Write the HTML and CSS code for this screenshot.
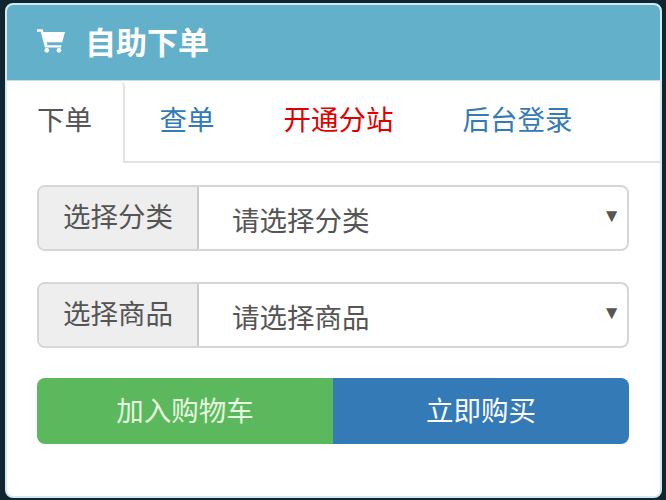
FILE: index.html
```html
<!DOCTYPE html>
<html lang="zh-CN">
  <head>
    <meta charset="UTF-8" />
    <title>自助下单</title>
    <link rel="stylesheet" href="styles.css">
  </head>
  <body>
    <div class="panel">
      <div class="panel-heading">
        <svg class="cart" viewBox="0 0 30 26">
          <path d="M0 1h6l1 3h23l-3 11H10.500l.5 3h15v2.500H8.500L4 3.500H0z" fill="#fff" />
          <circle cx="10.500" cy="23.500" r="2.500" fill="#fff" />
          <circle cx="23.500" cy="23.500" r="2.500" fill="#fff" />
        </svg>
        <h3>自助下单</h3>
      </div>
      <ul class="tabs">
        <li class="tab active">下单</li>
        <li class="tab">查单</li>
        <li class="tab red">开通分站</li>
        <li class="tab">后台登录</li>
      </ul>
      <div class="panel-body">
        <div class="input-group">
          <span class="addon">选择分类</span>
          <div class="select">请选择分类<span class="arrow">▼</span></div>
        </div>
        <div class="input-group">
          <span class="addon">选择商品</span>
          <div class="select">请选择商品<span class="arrow">▼</span></div>
        </div>
        <div class="btn-group">
          <div class="btn green">加入购物车</div>
          <div class="btn blue">立即购买</div>
        </div>
      </div>
    </div>
  </body>
</html>
```

FILE: styles.css
```css
html,
body {
  height: 100%;
}
body {
  margin: 0;
  padding: 3px 4px 2px 5px;
  box-sizing: border-box;
  background-color: #0f2630;
  font-family: "Liberation Sans", "Noto Sans CJK SC", sans-serif;
  overflow: hidden;
}
.panel {
  height: 100%;
  background-color: #fff;
  border: 2px solid #d3e9f1;
  border-radius: 8px;
  box-sizing: border-box;
  overflow: hidden;
}
.panel-heading {
  height: 76px;
  display: flex;
  align-items: center;
  padding: 0 0 5px 30px;
  box-sizing: border-box;
  background-color: #63b0cb;
  border-bottom: 1px solid #c5dfe8;
}
.cart {
  width: 28px;
  height: 25px;
}
h3 {
  margin: 0 0 0 20px;
  font-size: 31px;
  font-weight: 700;
  color: #fff;
}
.tabs {
  display: flex;
  height: 82px;
  margin: 0;
  padding: 0;
  list-style: none;
  border-bottom: 2px solid #e2e2e2;
  box-sizing: border-box;
}
.tab {
  padding: 0 34.500px;
  font-size: 27.500px;
  line-height: 79px;
  color: #337ab7;
}
.active {
  height: 82px;
  padding: 0 31px 0 30px;
  color: #555;
  background-color: #fff;
  border-right: 2px solid #e2e2e2;
  border-radius: 0 6px 0 0;
}
.red {
  color: #e00000;
}
.panel-body {
  padding: 22px 31px 0 30px;
}
.input-group {
  display: flex;
  height: 66px;
  margin-bottom: 31px;
  border: 2px solid #d6d6d6;
  border-radius: 8px;
  box-sizing: border-box;
  overflow: hidden;
}
.addon {
  width: 160px;
  padding-bottom: 6px;
  box-sizing: border-box;
  display: flex;
  align-items: center;
  justify-content: center;
  font-size: 27.500px;
  color: #555;
  background-color: #eee;
  border-right: 2px solid #ccc;
}
.select {
  flex: 1;
  display: flex;
  align-items: center;
  justify-content: space-between;
  padding: 1px 6px 0 33px;
  font-size: 27.500px;
  color: #555;
}
.arrow {
  font-size: 19px;
  padding-bottom: 6px;
}
.btn-group {
  display: flex;
  height: 66px;
  margin-top: -1px;
  border-radius: 8px;
  overflow: hidden;
}
.btn {
  flex: 1;
  display: flex;
  align-items: center;
  justify-content: center;
  padding-bottom: 4px;
  font-size: 27.500px;
}
.green {
  color: #e6f7e0;
  background-color: #5cb85c;
}
.blue {
  color: #fff;
  background-color: #337ab7;
}
```
